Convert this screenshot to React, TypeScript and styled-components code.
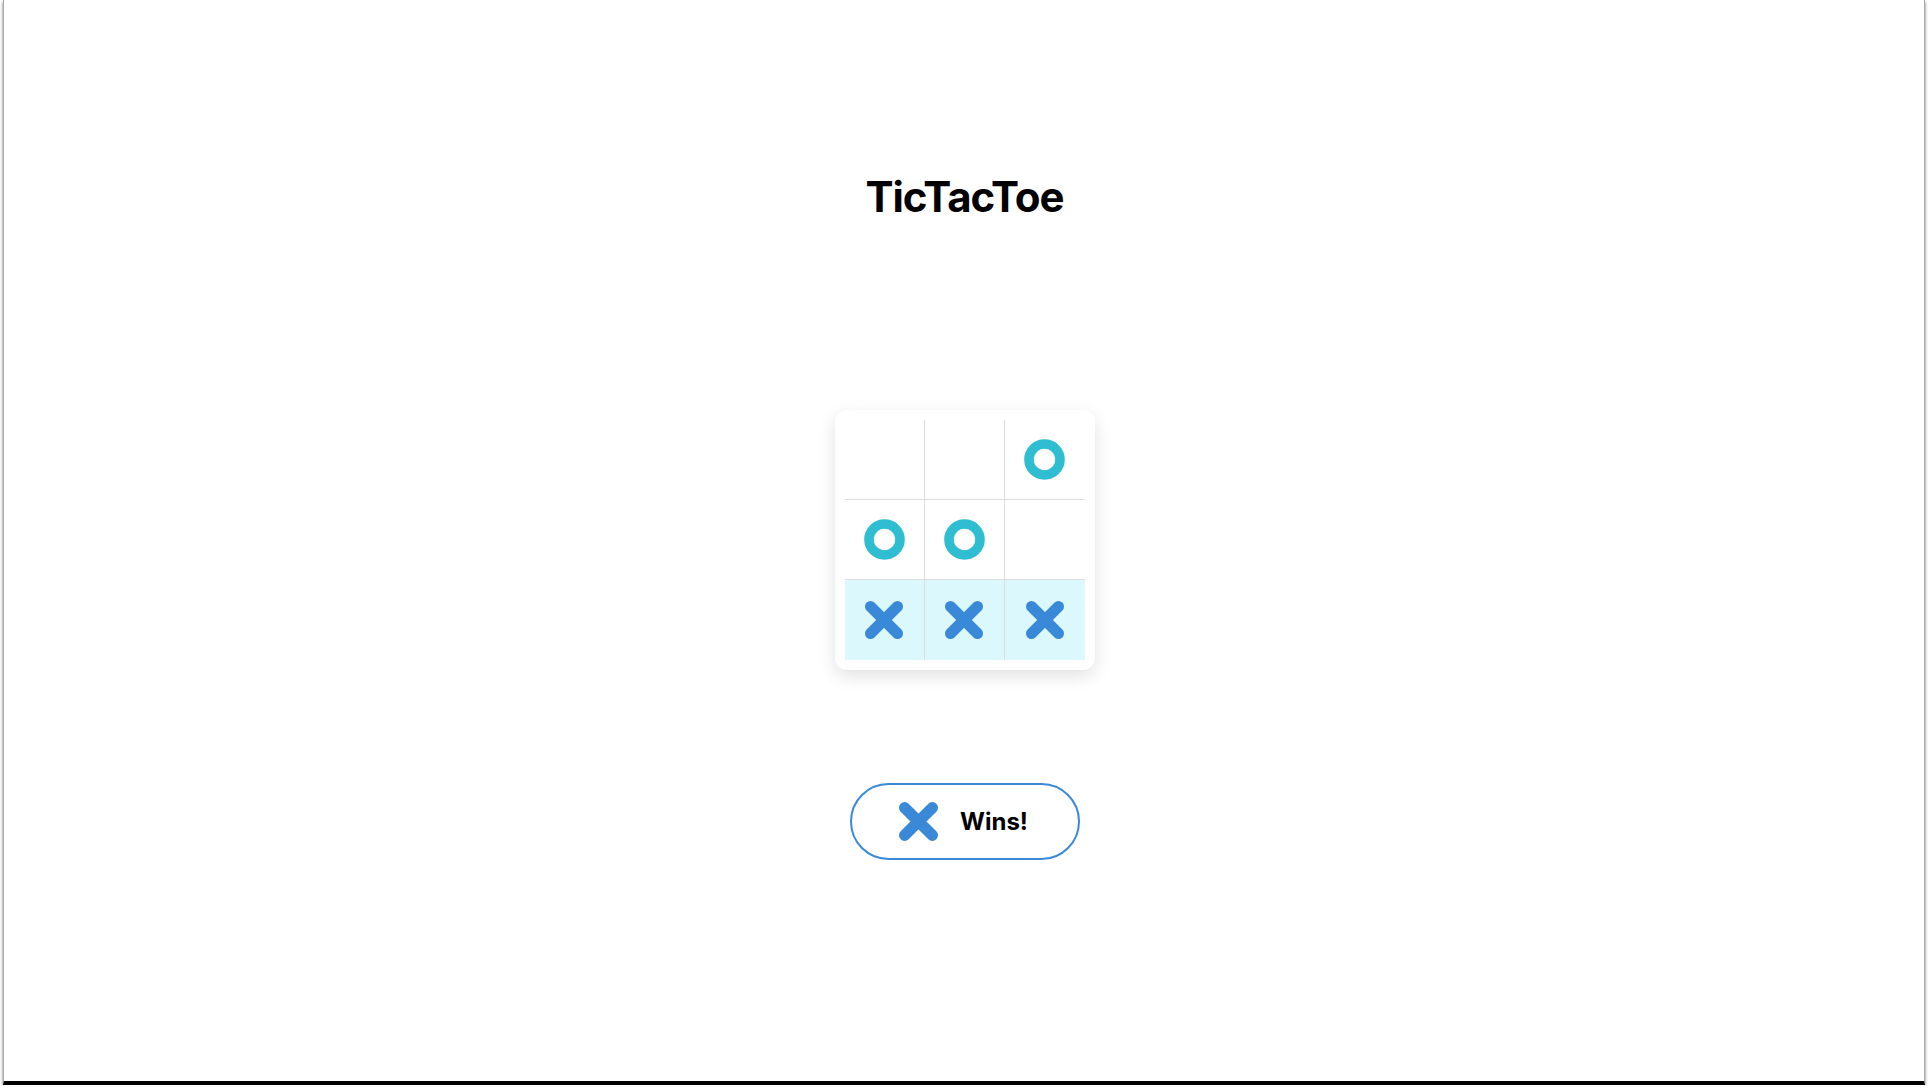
import React from "react";
import styled, { createGlobalStyle } from "styled-components";

const Global = createGlobalStyle`
  html, body { margin: 0; padding: 0; background: #ffffff; }
  body { font-family: Inter, "Noto Sans", "Liberation Sans", sans-serif; overflow: hidden; }
`;

const Frame = styled.div`
  box-sizing: border-box;
  margin-left: 3px;
  width: 1922px;
  height: 1085px;
  background: #fff;
  border-left: 1px solid #a8a8a8;
  border-right: 1px solid #a8a8a8;
  border-bottom: 4px solid #000;
  box-shadow: 0 2px 3px rgba(0, 0, 0, 0.55);
  display: flex;
  flex-direction: column;
  align-items: center;
`;

const Title = styled.h1`
  margin: 168px 0 0;
  font-size: 42px;
  line-height: 58px;
  font-weight: 700;
  color: #000;
  letter-spacing: -1px;
  padding-left: 1px;
`;

const Card = styled.div`
  margin-top: 184px;
  margin-left: 1px;
  padding: 10px;
  background: #fff;
  border-radius: 12px;
  box-shadow: 0 6px 18px rgba(0, 0, 0, 0.12);
`;

const Board = styled.div`
  display: grid;
  grid-template-columns: repeat(3, 80px);
  grid-template-rows: repeat(3, 80px);
`;

const Cell = styled.div<{ $win?: boolean; $col: number; $row: number }>`
  box-sizing: border-box;
  display: flex;
  align-items: center;
  justify-content: center;
  background: ${(p) => (p.$win ? "#dbf8fd" : "#fff")};
  border-right: ${(p) => (p.$col < 2 ? "1px solid #dddddd" : "none")};
  border-bottom: ${(p) => (p.$row < 2 ? "1px solid #dddddd" : "none")};
`;

const WinButton = styled.button`
  margin-top: 113px;
  margin-left: 1px;
  box-sizing: border-box;
  width: 230px;
  height: 77px;
  border: 2px solid #3a89d8;
  border-radius: 999px;
  background: #fff;
  display: flex;
  align-items: center;
  justify-content: center;
  gap: 22px;
  padding: 0 2px 0 0;
  font-family: Inter, "Noto Sans", "Liberation Sans", sans-serif;
  font-size: 24px;
  font-weight: 700;
  color: #000;
  cursor: pointer;
`;

const XMark = ({ size = 38 }: { size?: number }) => (
  <svg width={size} height={size} viewBox="-19 -19 38 38">
    <path
      d="M-13.5 -13.5 L13.5 13.5 M13.5 -13.5 L-13.5 13.5"
      stroke="#3a89d8"
      strokeWidth={11}
      strokeLinecap="round"
      fill="none"
    />
  </svg>
);

const OMark = () => (
  <svg width={41} height={41} viewBox="-20.5 -20.5 41 41">
    <circle r={15.5} stroke="#2ebdd1" strokeWidth={9.6} fill="none" />
  </svg>
);

const cells: (null | "X" | "O")[] = [null, null, "O", "O", "O", null, "X", "X", "X"];
const winning = [6, 7, 8];

export default function App() {
  return (
    <>
      <Global />
      <Frame>
        <Title>TicTacToe</Title>
        <Card>
          <Board>
            {cells.map((v, i) => (
              <Cell key={i} $col={i % 3} $row={Math.floor(i / 3)} $win={winning.includes(i)}>
                {v === "X" && <XMark />}
                {v === "O" && <OMark />}
              </Cell>
            ))}
          </Board>
        </Card>
        <WinButton>
          <XMark size={39} />
          <span>Wins!</span>
        </WinButton>
      </Frame>
    </>
  );
}
